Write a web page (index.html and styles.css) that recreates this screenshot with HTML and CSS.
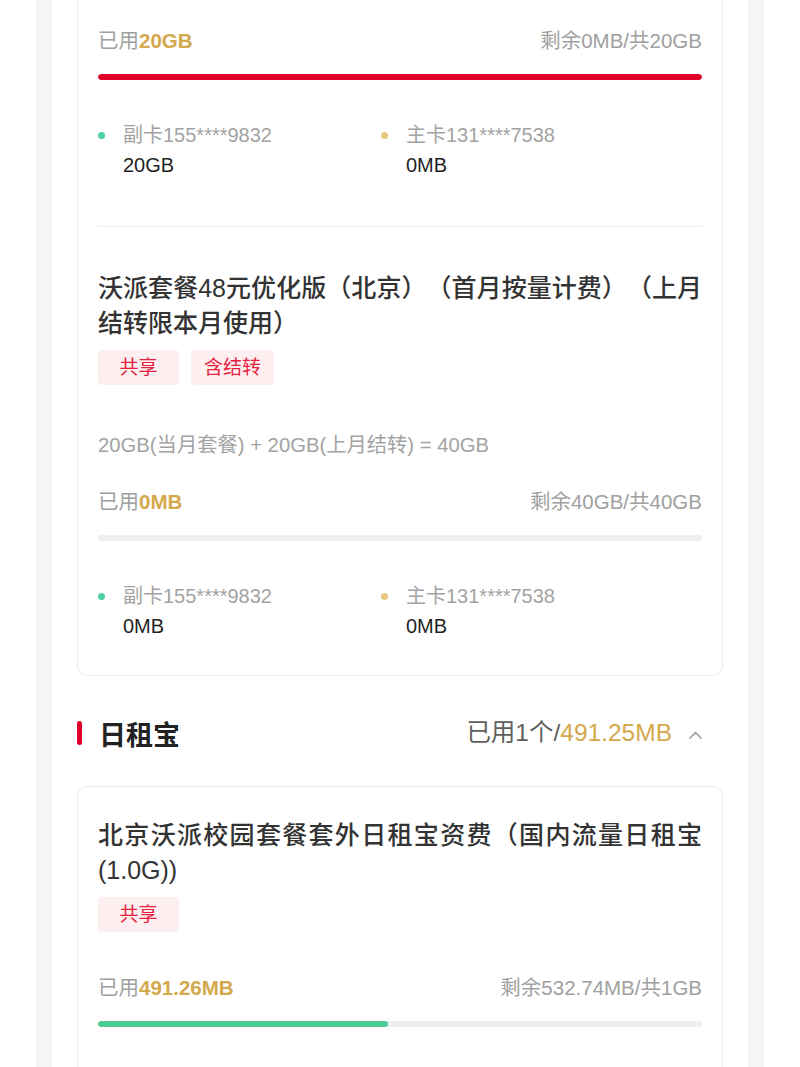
FILE: index.html
```html
<!DOCTYPE html>
<html lang="zh-CN">
<head>
<meta charset="utf-8">
<title>流量详情</title>
<link rel="stylesheet" href="styles.css">
</head>
<body>
<div class="page">
  <div class="frame">
    <div class="panel">
      <div class="card card-cont">
        <div class="usage"><span class="used">已用<b>20GB</b></span><span class="remain">剩余0MB/共20GB</span></div>
        <div class="track"><div class="fill fill-red" style="width:100%"></div></div>
        <div class="legend">
          <div class="leg"><i class="dot dot-green"></i><span class="leg-label">副卡155****9832</span><span class="leg-val">20GB</span></div>
          <div class="leg"><i class="dot dot-gold"></i><span class="leg-label">主卡131****7538</span><span class="leg-val">0MB</span></div>
        </div>
        <div class="divider"></div>
        <div class="plan-title">沃派套餐48元优化版（北京）（首月按量计费）（上月结转限本月使用）</div>
        <div class="tags"><span class="tag">共享</span><span class="tag">含结转</span></div>
        <div class="formula">20GB(当月套餐) + 20GB(上月结转) = 40GB</div>
        <div class="usage usage-after"><span class="used">已用<b>0MB</b></span><span class="remain">剩余40GB/共40GB</span></div>
        <div class="track"><div class="fill fill-red" style="width:0%"></div></div>
        <div class="legend">
          <div class="leg"><i class="dot dot-green"></i><span class="leg-label">副卡155****9832</span><span class="leg-val">0MB</span></div>
          <div class="leg"><i class="dot dot-gold"></i><span class="leg-label">主卡131****7538</span><span class="leg-val">0MB</span></div>
        </div>
      </div>

      <div class="section-head">
        <div class="section-title"><i class="section-bar"></i><span>日租宝</span></div>
        <div class="section-sum"><span class="sum-gray">已用1个/</span><span class="sum-gold">491.25MB</span>
          <svg class="chevron" width="13" height="8" viewBox="0 0 13 8"><polyline points="1,7 6.5,1.5 12,7" fill="none" stroke="#9a9a9a" stroke-width="1.6" stroke-linecap="round" stroke-linejoin="round"/></svg>
        </div>
      </div>

      <div class="card card-open">
        <div class="plan-title">北京沃派校园套餐套外日租宝资费（国内流量日租宝(1.0G))</div>
        <div class="tags"><span class="tag">共享</span></div>
        <div class="usage usage-after2"><span class="used">已用<b>491.26MB</b></span><span class="remain">剩余532.74MB/共1GB</span></div>
        <div class="track"><div class="fill fill-green" style="width:48%"></div></div>
      </div>
    </div>
  </div>
</div>
</body>
</html>
```

FILE: styles.css
```css
* { box-sizing: border-box; }

html, body {
  margin: 0;
  padding: 0;
  background: #ffffff;
}

body {
  font-family: "Liberation Sans", "Noto Sans CJK SC", sans-serif;
  color: #222222;
  text-spacing-trim: space-all;
}

.page {
  padding: 0 36px;
}

.frame {
  background: #f5f5f7;
  padding: 0 16px;
}

.panel {
  background: #ffffff;
  padding: 0 25px 0;
}

.card {
  border: 1px solid #ebebeb;
  border-radius: 10px;
  padding: 0 20px 34px;
}

.card-cont {
  border-top: none;
  border-radius: 0 0 10px 10px;
  padding-top: 27px;
}

.card-open {
  margin-top: 33px;
  padding-top: 31px;
  padding-bottom: 60px;
  border-bottom: none;
  border-radius: 10px 10px 0 0;
}

.usage {
  display: flex;
  justify-content: space-between;
  align-items: center;
  font-size: 20.5px;
  line-height: 28px;
  color: #a0a0a0;
}

.usage b {
  color: #d4a84c;
  font-weight: 700;
}

.usage-after { margin-top: 29px; }
.usage-after2 { margin-top: 42px; }

.track {
  margin-top: 19px;
  height: 6px;
  border-radius: 3px;
  background: #efefef;
  overflow: hidden;
}

.fill {
  height: 100%;
  border-radius: 3px;
}

.fill-red { background: #df0029; }
.fill-green { background: #4ccb95; }

.legend {
  display: grid;
  grid-template-columns: 283px 1fr;
  margin-top: 40px;
}

.leg {
  display: grid;
  grid-template-columns: 7px auto;
  column-gap: 18px;
  align-items: center;
  justify-content: start;
}

.dot {
  display: block;
  width: 7px;
  height: 7px;
  border-radius: 50%;
  grid-row: 1;
  grid-column: 1;
}

.dot-green { background: #4fd0a0; }
.dot-gold { background: #e6c77c; }

.leg-label {
  grid-row: 1;
  grid-column: 2;
  font-size: 20px;
  line-height: 30px;
  color: #a3a3a3;
}

.leg-val {
  grid-row: 2;
  grid-column: 2;
  font-size: 20px;
  line-height: 30px;
  color: #1f1f1f;
}

.divider {
  margin-top: 46px;
  height: 1px;
  background: #eeeeee;
}

.plan-title {
  margin-top: 44px;
  font-size: 25px;
  line-height: 35px;
  font-weight: 500;
  color: #333333;
  text-align: justify;
  text-spacing-trim: space-all;
}

.card-open .plan-title { margin-top: 0; }

.tags {
  display: flex;
  gap: 12px;
  margin-top: 9px;
}

.tag {
  min-width: 81px;
  height: 35px;
  padding: 0 13px;
  border-radius: 4px;
  background: #fdeef0;
  color: #e5213d;
  font-size: 19px;
  line-height: 35px;
  text-align: center;
}

.formula {
  margin-top: 46px;
  font-size: 20.3px;
  line-height: 28px;
  color: #a3a3a3;
}

.section-head {
  display: flex;
  justify-content: space-between;
  align-items: center;
  margin-top: 37px;
  height: 40px;
  padding-right: 21px;
}

.section-title {
  display: flex;
  align-items: center;
  gap: 17px;
  font-size: 27px;
  font-weight: 700;
  color: #222222;
}

.section-bar {
  display: block;
  width: 5px;
  height: 24px;
  border-radius: 3px;
  background: #e0002a;
}

.section-sum {
  display: flex;
  align-items: center;
  font-size: 24.5px;
  line-height: 30px;
}

.sum-gray { color: #5f5f5f; }
.sum-gold { color: #d4a84c; }

.chevron {
  display: block;
  margin-left: 17px;
  margin-top: 4px;
}
```
